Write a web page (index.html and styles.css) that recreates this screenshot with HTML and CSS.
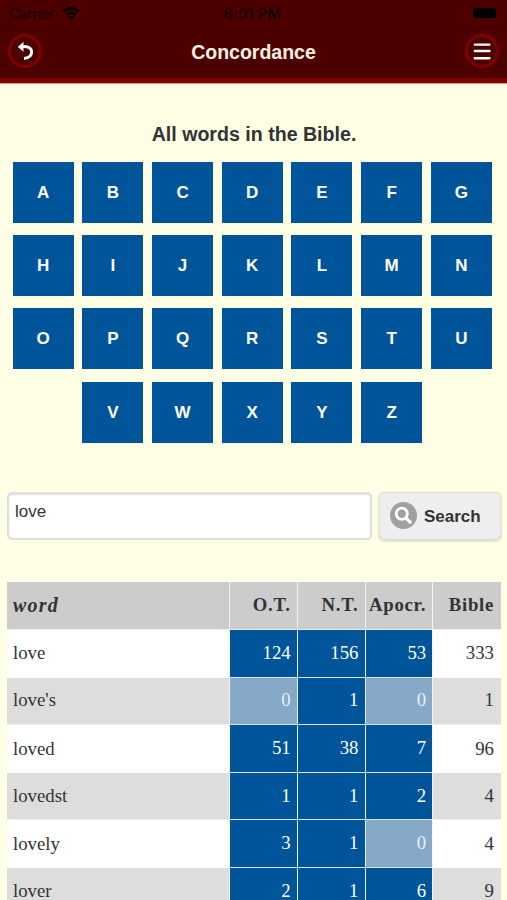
FILE: index.html
```html
<!DOCTYPE html>
<html lang="en">
<head>
    <meta charset="UTF-8">
    <meta name="viewport" content="width=device-width, initial-scale=1.0">
    <title>Concordance</title>
    <link rel="stylesheet" href="styles.css">
</head>
<body>
    <header class="header">
        <div class="status-bar">
            <div class="carrier">
                <span>Carrier</span>
                <svg class="wifi" viewBox="0 0 18 13" width="18" height="13" fill="none" stroke="#000">
                    <path d="M1.2 4.6a11.2 11.2 0 0 1 15.6 0" stroke-width="2.7"/>
                    <path d="M4.2 7.8a7 7 0 0 1 9.6 0" stroke-width="2.5"/>
                    <path d="M9 13L6.2 10.1a4.1 4.1 0 0 1 5.6 0z" fill="#000" stroke="none"/>
                </svg>
            </div>
            <span class="time">6:01 PM</span>
            <span class="battery"></span>
        </div>
        <div class="toolbar">
            <a href="#" class="round-btn" aria-label="Back">
                <svg viewBox="0 0 34 34" width="34" height="34" fill="none" stroke="#fff">
                    <path d="M14 12.6c6.500-.4 9.600 1.600 9.600 5.400 0 3.600-2.800 6-7.600 6.500" stroke-width="2.9"/>
                    <path d="M9.800 13l5.700-5.200v10z" fill="#fff" stroke="none"/>
                </svg>
            </a>
            <h1>Concordance</h1>
            <a href="#" class="round-btn" aria-label="Menu">
                <svg viewBox="0 0 34 34" width="34" height="34" stroke="#fff" stroke-width="2.4" stroke-linecap="round">
                    <path d="M9.8 10.6h14.6M9.8 17h14.6M9.8 24.2h14.6"/>
                </svg>
            </a>
        </div>
    </header>

    <main class="content">
        <h2>All words in the Bible.</h2>
        <nav class="letters">
            <a href="#">A</a>
            <a href="#">B</a>
            <a href="#">C</a>
            <a href="#">D</a>
            <a href="#">E</a>
            <a href="#">F</a>
            <a href="#">G</a>
            <a href="#">H</a>
            <a href="#">I</a>
            <a href="#">J</a>
            <a href="#">K</a>
            <a href="#">L</a>
            <a href="#">M</a>
            <a href="#">N</a>
            <a href="#">O</a>
            <a href="#">P</a>
            <a href="#">Q</a>
            <a href="#">R</a>
            <a href="#">S</a>
            <a href="#">T</a>
            <a href="#">U</a>
            <a href="#">V</a>
            <a href="#">W</a>
            <a href="#">X</a>
            <a href="#">Y</a>
            <a href="#">Z</a>
        </nav>

        <form class="search">
            <input type="text" value="love" aria-label="Word">
            <button type="button">
                <svg viewBox="0 0 27 27" width="27" height="27" fill="none" stroke="#fff">
                    <circle cx="13.5" cy="13.5" r="13.5" fill="#a0a0a0" stroke="none"/>
                    <circle cx="11.8" cy="11.8" r="5.6" stroke-width="2.8"/>
                    <path d="M15.8 15.8l5.2 5.4" stroke-width="3.2"/>
                </svg>
                <span>Search</span>
            </button>
        </form>

        <table class="results">
            <thead>
                <tr><th class="word">word</th><th>O.T.</th><th>N.T.</th><th>Apocr.</th><th>Bible</th></tr>
            </thead>
            <tbody>
                <tr><td>love</td><td class="hit">124</td><td class="hit">156</td><td class="hit">53</td><td>333</td></tr>
                <tr><td>love's</td><td class="none">0</td><td class="hit">1</td><td class="none">0</td><td>1</td></tr>
                <tr><td>loved</td><td class="hit">51</td><td class="hit">38</td><td class="hit">7</td><td>96</td></tr>
                <tr><td>lovedst</td><td class="hit">1</td><td class="hit">1</td><td class="hit">2</td><td>4</td></tr>
                <tr><td>lovely</td><td class="hit">3</td><td class="hit">1</td><td class="none">0</td><td>4</td></tr>
                <tr><td>lover</td><td class="hit">2</td><td class="hit">1</td><td class="hit">6</td><td>9</td></tr>
            </tbody>
        </table>
    </main>
</body>
</html>
```
FILE: styles.css
```css
* {
    margin: 0;
    padding: 0;
    box-sizing: border-box;
}

body {
    height: 900px;
    overflow: hidden;
    background: #ffffe6;
    color: #333;
    font-family: "Liberation Sans", Arial, sans-serif;
}

a {
    color: inherit;
    text-decoration: none;
}

.header {
    height: 83px;
    background: #4d0000;
    border-bottom: 5px solid #800000;
    box-shadow: 0 1px 0 #e0a090;
}

.status-bar {
    display: grid;
    grid-template-columns: 1fr auto 1fr;
    align-items: center;
    height: 28px;
    padding: 0 11px 0 9px;
    color: #140000;
    font-family: Inter, sans-serif;
    font-size: 14px;
}

.carrier {
    display: flex;
    align-items: center;
    gap: 7px;
    margin-top: -2px;
}

.time {
    margin-top: -2px;
    font-weight: 600;
    letter-spacing: 0.5px;
}

.battery {
    justify-self: end;
    width: 23px;
    height: 10px;
    margin-top: -2px;
    border-radius: 3px;
    background: #000;
}

.toolbar {
    display: flex;
    align-items: center;
    justify-content: space-between;
    height: 46px;
    padding: 0 8px;
}

.toolbar h1 {
    padding-top: 1px;
    color: #fff2e0;
    font-size: 19.5px;
    line-height: 24px;
}

.round-btn {
    width: 34px;
    height: 34px;
    border-radius: 50%;
    box-shadow: inset 0 0 0 3px #800000;
}

.round-btn svg {
    display: block;
}

.content {
    padding: 39px 6px 0 7px;
}

h2 {
    font-size: 19.6px;
    line-height: 24px;
    text-align: center;
}

.letters {
    display: flex;
    flex-wrap: wrap;
    justify-content: center;
    gap: 12.3px 8.7px;
    margin: 15.8px 3.6px 0 0;
}

.letters a {
    width: 61px;
    height: 61px;
    background: #005499;
    color: #fff;
    font-size: 17px;
    font-weight: bold;
    line-height: 62px;
    text-align: center;
}

.search {
    display: flex;
    gap: 7px;
    height: 48px;
    margin-top: 48.9px;
}

.search input {
    width: 365px;
    padding: 0 6px 8px;
    border: 2px solid #dedede;
    border-radius: 5px;
    background: #fff;
    box-shadow: inset 0 1px 2px #ddd;
    color: #333;
    font: 17px "Liberation Sans", Arial, sans-serif;
}

.search button {
    display: flex;
    flex: 1;
    align-items: center;
    gap: 7px;
    padding-left: 10px;
    border: 1px solid #ddd;
    border-radius: 5px;
    background: #eee;
    box-shadow: 0 1px 3px rgba(0, 0, 0, 0.2);
    color: #333;
    font: bold 17px "Liberation Sans", Arial, sans-serif;
}

.search button span {
    padding-top: 2px;
}

.results {
    width: 494px;
    margin-top: 42.9px;
    border-collapse: separate;
    border-spacing: 0;
    table-layout: fixed;
    font-family: "Liberation Serif", serif;
    font-size: 18.8px;
}

.results th,
.results td {
    height: 47.6px;
    padding: 0 6px 1px 0;
    border-right: 1px solid #f0f4f8;
    text-align: right;
}

.results th {
    background: #ccc;
    border-bottom: 1px solid #eee;
    letter-spacing: 0.7px;
}

.results td {
    background: #fff;
}

.results tr > :first-child {
    width: 223px;
    padding-left: 6px;
    text-align: left;
}

.results tr > :last-child {
    padding-right: 7px;
    border-right: 0;
}

.results .word {
    font-size: 20px;
    font-style: italic;
    letter-spacing: 1.2px;
}

.results tbody tr:nth-child(even) td {
    border-bottom: 1px solid #eee;
    background: #ddd;
}

.results tbody .hit,
.results tbody tr:nth-child(even) .hit {
    border-bottom: 1px solid #d9e8f4;
    background: #005499;
    color: #fff;
}

.results tbody .none,
.results tbody tr:nth-child(even) .none {
    border-bottom: 1px solid #d9e8f4;
    background: #85a9c7;
    color: #e8f0f6;
}
```
